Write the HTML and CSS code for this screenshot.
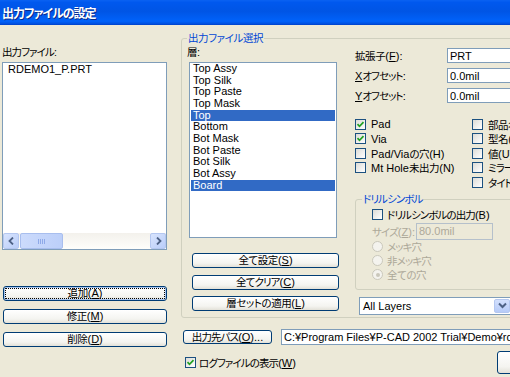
FILE: index.html
```html
<!DOCTYPE html>
<html lang="ja">
<head>
<meta charset="utf-8">
<title>出力ファイルの設定</title>
<link rel="stylesheet" href="styles.css">
</head>
<body>
<div class="window">
  <div class="titlebar"><span class="title">出力ファイルの設定</span></div>
  <div class="client">
    <div class="left">
      <div class="label"><span class="jk">出力ファイル:</span></div>
      <div class="listbox files">
        <div class="items"><div class="item">RDEMO1_P.PRT</div></div>
        <div class="hscroll">
          <div class="sb-btn"><svg width="7" height="8" viewBox="0 0 7 8"><path d="M5 0.5 L1.5 4 L5 7.5" fill="none" stroke="#4D6185" stroke-width="1.8"/></svg></div>
          <div class="sb-track"><div class="sb-thumb"><span class="grip"></span><span class="grip"></span><span class="grip"></span><span class="grip"></span></div></div>
          <div class="sb-btn"><svg width="7" height="8" viewBox="0 0 7 8"><path d="M2 0.5 L5.5 4 L2 7.5" fill="none" stroke="#4D6185" stroke-width="1.8"/></svg></div>
        </div>
      </div>
      <div class="btn-stack">
        <div class="btn focused"><span class="j">追加</span>(<u>A</u>)</div>
        <div class="btn"><span class="j">修正</span>(<u>M</u>)</div>
        <div class="btn"><span class="j">削除</span>(<u>D</u>)</div>
      </div>
    </div>

    <div class="main">
      <fieldset class="group">
        <legend><span class="j">出力ファイル選択</span></legend>
        <div class="group-inner">
          <div class="layers-col">
            <div class="label"><span class="j">層</span>:</div>
            <div class="listbox layers">
              <div class="item">Top Assy</div>
              <div class="item">Top Silk</div>
              <div class="item">Top Paste</div>
              <div class="item">Top Mask</div>
              <div class="item sel">Top</div>
              <div class="item">Bottom</div>
              <div class="item">Bot Mask</div>
              <div class="item">Bot Paste</div>
              <div class="item">Bot Silk</div>
              <div class="item">Bot Assy</div>
              <div class="item sel">Board</div>
            </div>
            <div class="btn-stack inner">
              <div class="btn"><span class="j">全て設定</span>(<u>S</u>)</div>
              <div class="btn"><span class="jk">全てクリア</span>(<u>C</u>)</div>
              <div class="btn"><span class="j">層セットの適用</span>(<u>L</u>)</div>
            </div>
          </div>

          <div class="settings-col">
            <div class="field-row first"><span class="field-label"><span class="j">拡張子</span>(<u>F</u>):</span><span class="edit">PRT</span></div>
            <div class="field-row"><span class="field-label"><u>X</u><span class="jk">オフセット</span>:</span><span class="edit">0.0mil</span></div>
            <div class="field-row"><span class="field-label"><u>Y</u><span class="jk">オフセット</span>:</span><span class="edit">0.0mil</span></div>

            <div class="check-grid">
              <div class="check-col">
                <div class="check-row"><span class="cb checked"><svg width="9" height="9" viewBox="0 0 9 9"><path d="M1.5 4.2 L3.5 6.3 L7.5 2.2" fill="none" stroke="#21A121" stroke-width="1.7"/></svg></span><span>Pad</span></div>
                <div class="check-row"><span class="cb checked"><svg width="9" height="9" viewBox="0 0 9 9"><path d="M1.5 4.2 L3.5 6.3 L7.5 2.2" fill="none" stroke="#21A121" stroke-width="1.7"/></svg></span><span>Via</span></div>
                <div class="check-row"><span class="cb"></span><span>Pad/Via<span class="j">の穴</span>(H)</span></div>
                <div class="check-row"><span class="cb"></span><span>Mt Hole<span class="j">未出力</span>(N)</span></div>
              </div>
              <div class="check-col">
                <div class="check-row"><span class="cb"></span><span><span class="j">部品名</span>(R)</span></div>
                <div class="check-row"><span class="cb"></span><span><span class="j">型名</span>(T)</span></div>
                <div class="check-row"><span class="cb"></span><span><span class="j">値</span>(U)</span></div>
                <div class="check-row"><span class="cb"></span><span><span class="jk">ミラー</span>(I)</span></div>
                <div class="check-row"><span class="cb"></span><span><span class="jk">タイトル</span>(K)</span></div>
              </div>
            </div>

            <fieldset class="drill">
              <legend><span class="jk">ドリルシンボル</span></legend>
              <div class="check-row"><span class="cb"></span><span><span class="jk">ドリルシンボルの出力</span>(B)</span></div>
              <div class="size-row"><span class="dis"><span class="jk">サイズ</span>(<u>Z</u>):</span><span class="edit disabled">80.0mil</span></div>
              <div class="radio-row"><span class="radio"></span><span class="dis jk">メッキ穴</span></div>
              <div class="radio-row"><span class="radio"></span><span class="dis jk">非メッキ穴</span></div>
              <div class="radio-row"><span class="radio on"></span><span class="dis j">全ての穴</span></div>
            </fieldset>

            <div class="combo"><span class="combo-text">All Layers</span><span class="combo-btn"><svg width="9" height="7" viewBox="0 0 9 7"><path d="M1 1.5 L4.5 5 L8 1.5" fill="none" stroke="#4D6185" stroke-width="2"/></svg></span></div>
          </div>
        </div>
      </fieldset>

      <div class="path-row">
        <div class="btn path-btn"><span class="jk">出力先パス</span>(<u>O</u>)...</div>
        <span class="edit path">C:¥Program Files¥P-CAD 2002 Trial¥Demo¥rdemo1</span>
      </div>
      <div class="log-row">
        <span class="cb checked"><svg width="9" height="9" viewBox="0 0 9 9"><path d="M1.5 4.2 L3.5 6.3 L7.5 2.2" fill="none" stroke="#21A121" stroke-width="1.7"/></svg></span>
        <span class="log-text"><span class="jk">ログファイルの表示</span>(<u>W</u>)</span>
        <div class="btn ok-btn">OK</div>
      </div>
    </div>
  </div>
</div>
</body>
</html>
```

FILE: styles.css
```css
* { box-sizing: border-box; }
html, body { margin: 0; padding: 0; }
body {
  width: 510px;
  height: 377px;
  overflow: hidden;
  background: #ECE9D8;
  font-family: "Liberation Sans", "Noto Sans CJK JP", sans-serif;
  font-size: 11px;
  color: #000;
  font-feature-settings: "palt";
}
.window { width: 510px; height: 377px; overflow: hidden; background: #ECE9D8; }

.j { font-size: 10.5px; letter-spacing: -0.4px; }
.jk { font-size: 10.5px; letter-spacing: -0.9px; }

.titlebar {
  height: 25px;
  display: flex;
  align-items: center;
  padding-left: 2px;
  background: linear-gradient(#0A62F2 0, #0058EE 10%, #0055E5 45%, #0062FA 85%, #0050E0 95%, #0040C8 100%);
}
.title {
  color: #fff;
  font-weight: bold;
  font-size: 12px;
  letter-spacing: -1px;
  text-shadow: 1px 1px #0A2A8A;
  white-space: nowrap;
}

.client { display: flex; align-items: flex-start; padding-left: 2px; }

.left { width: 165px; flex: none; padding-top: 20px; }
.label { height: 15px; line-height: 15px; margin-bottom: 2px; white-space: nowrap; }

.listbox { background: #fff; border: 1px solid #7F9DB9; }
.files { height: 188px; display: flex; flex-direction: column; }
.files .items { flex: 1; padding: 1px 3px; }
.item { height: 11.67px; line-height: 11.67px; white-space: nowrap; padding-left: 2px; }

.hscroll { height: 16px; display: flex; background: linear-gradient(#F3F1EC, #FEFEFB); padding: 0; }
.sb-btn {
  width: 16px; height: 16px; flex: none;
  display: flex; align-items: center; justify-content: center;
  background: linear-gradient(135deg, #D8E4FD, #B9CDF9);
  border: 1px solid #B4C7F0;
  border-radius: 2px;
}
.sb-track { flex: 1; display: flex; padding: 0 1px; }
.sb-thumb {
  width: 43px; height: 16px;
  display: flex; align-items: center; justify-content: center; gap: 1px;
  background: linear-gradient(90deg, #CCDBFC, #BCCFF9);
  border: 1px solid #A8BEEE;
  border-radius: 2px;
}
.grip { width: 1px; height: 5px; background: #8EA9E8; }

.btn-stack { display: flex; flex-direction: column; gap: 8px; margin-top: 36px; margin-left: 1px; }
.btn {
  height: 15px;
  display: flex; align-items: center; justify-content: center;
  border: 1px solid #003C74;
  border-radius: 3px;
  background: linear-gradient(#FFFFFF, #F4F4F0 70%, #E3E1D8);
  white-space: nowrap;
  line-height: 13px;
}
.btn.focused { box-shadow: inset 0 0 0 1px #A8C4EE; outline: 1px dotted #000; outline-offset: -3px; }

.main { width: 391px; flex: none; margin-left: 14px; }

fieldset { margin: 0; padding: 0; min-width: 0; }
legend { color: #0046D5; padding: 0 1px; line-height: 13px; white-space: nowrap; }

.group {
  margin-top: 7px;
  border: 1px solid #D0D0BF;
  border-radius: 3px;
  padding: 0 0 6px 5px;
  height: 286px;
}
.group-inner { display: flex; }
.layers-col { width: 152px; flex: none; }
.layers { margin-left: 2px; width: 148px; height: 176px; padding: 0 1px; }
.layers .item { padding-left: 2px; }
.item.sel { background: #316AC5; color: #fff; }

.btn-stack.inner { margin-top: 15px; margin-left: 5px; gap: 6.5px; width: 147px; }

.settings-col { margin-left: 16px; flex: 1; }
.field-row { display: flex; align-items: center; height: 15px; margin-top: 5px; }
.field-row.first { margin-top: 3px; }
.field-label { width: 92px; flex: none; white-space: nowrap; }
.edit {
  display: flex; align-items: center;
  height: 15px; width: 90px;
  background: #fff;
  border: 1px solid #7F9DB9;
  padding-left: 2px;
  white-space: nowrap;
  overflow: hidden;
}

.check-grid { display: flex; margin-top: 14px; }
.check-col { display: flex; flex-direction: column; }
.check-col:first-child { width: 117px; flex: none; }
.check-row { display: flex; align-items: center; gap: 5px; height: 14.5px; white-space: nowrap; }
.cb {
  width: 11px; height: 11px; flex: none;
  border: 1px solid #1C5180;
  background: linear-gradient(135deg, #DCDCD7, #FFFFFF);
  display: flex; align-items: center; justify-content: center;
}

.drill {
  margin-top: 3px;
  border: 1px solid #D0D0BF;
  border-radius: 3px;
  padding: 2px 0 0 16px;
  height: 97px;
  width: 200px;
}
.drill legend { margin-left: -10px; }
.drill .check-row { height: 13px; gap: 4px; }
.size-row { display: flex; align-items: center; height: 17px; margin-top: 2px; }
.size-row .dis { width: 44px; flex: none; }
.edit.disabled { height: 17px; width: 77px; background: #ECE9D8; border-color: #B5C0CB; color: #ACA899; }
.dis { color: #ACA899; white-space: nowrap; }
.radio-row { display: flex; align-items: center; gap: 4px; height: 14px; }
.radio-row:first-of-type { margin-top: 2px; }
.radio {
  width: 11px; height: 11px; flex: none;
  border-radius: 50%;
  border: 1px solid #CAC8BB;
  background: #F4F3EE;
  display: flex; align-items: center; justify-content: center;
}
.radio.on::after { content: ""; width: 4px; height: 4px; border-radius: 50%; background: #CAC8BB; }

.combo {
  margin-top: 7px; margin-left: 4px;
  width: 153px; height: 18px;
  display: flex; align-items: center;
  background: #fff;
  border: 1px solid #7F9DB9;
  padding: 1px;
}
.combo-text { flex: 1; padding-left: 2px; }
.combo-btn {
  width: 16px; height: 14px;
  display: flex; align-items: center; justify-content: center;
  background: linear-gradient(#D3E0FD, #B6CBF8);
  border: 1px solid #B4C7F0;
  border-radius: 2px;
}

.path-row { display: flex; align-items: center; margin-top: 11px; margin-left: 2px; gap: 9px; }
.path-btn { width: 89px; height: 14px; }
.edit.path { width: 260px; height: 16px; }

.log-row { display: flex; align-items: center; margin-top: 6px; margin-left: 4px; height: 23px; }
.log-text { margin-left: 3px; white-space: nowrap; }
.ok-btn { margin-left: auto; width: 75px; height: 23px; }
u { text-decoration: underline; }
```
